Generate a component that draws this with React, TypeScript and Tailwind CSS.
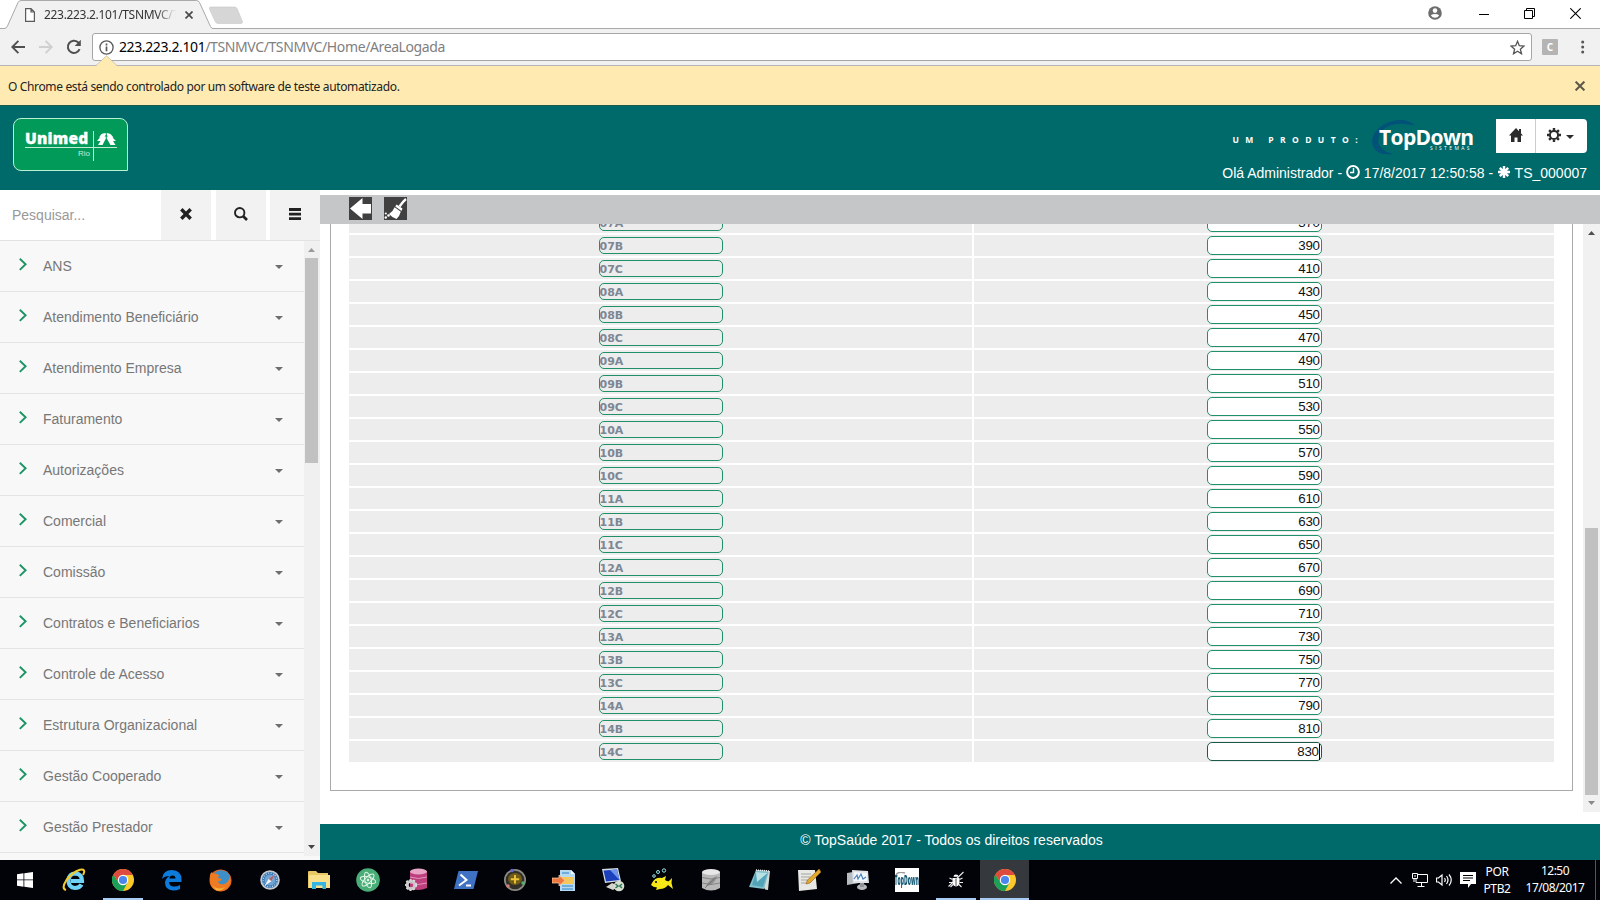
import type { ReactNode } from "react";

const menuItems = [
  "ANS",
  "Atendimento Beneficiário",
  "Atendimento Empresa",
  "Faturamento",
  "Autorizações",
  "Comercial",
  "Comissão",
  "Contratos e Beneficiarios",
  "Controle de Acesso",
  "Estrutura Organizacional",
  "Gestão Cooperado",
  "Gestão Prestador",
];

const rows = [
  "07A", "07B", "07C", "08A", "08B", "08C", "09A", "09B", "09C", "10A", "10B", "10C",
  "11A", "11B", "11C", "12A", "12B", "12C", "13A", "13B", "13C", "14A", "14B", "14C",
].map((code, i) => ({ code, value: 370 + i * 20 }));

function TabStrip() {
  return (
    <div className="flex h-[29px] shrink-0 border-b border-[#a9a9a9] bg-white">
      <div className="grid h-[29px] w-[213px] shrink-0">
        <svg className="[grid-area:1/1]" width="213" height="29" viewBox="0 0 213 29">
          <path d="M0 29V28.5H4Q6.5 28.5 7.500 26L18 2.500Q19 .5 21 .5H196.500Q198.500 .5 199.500 2.500L210.500 26.500Q211.500 28.500 213 28.500V29Z" fill="#f1f1f1" />
          <path d="M0 28.500H4Q6.500 28.500 7.500 26L18 2.500Q19 .5 21 .5H196.500Q198.500 .5 199.500 2.500L210.500 26.500Q211.500 28.500 213 28.500" fill="none" stroke="#a9a9a9" />
        </svg>
        <div className="z-10 flex h-[29px] items-center pl-[25px] [grid-area:1/1]">
          <svg width="10" height="14" viewBox="0 0 10 14" fill="#fff" stroke="#5a5a5a" strokeWidth="1.200">
            <path d="M.6.6H6L9.400 4V13.400H.6ZM6 .6V4H9.400" />
          </svg>
          <span className="ml-[9px] w-[132px] overflow-hidden whitespace-nowrap text-[12px] tracking-[-0.32px] text-[#333] [mask-image:linear-gradient(to_right,#000_112px,transparent_132px)]">
            223.223.2.101/TSNMVC/TSNMVC
          </span>
          <svg className="ml-[9px]" width="8" height="8" viewBox="0 0 8 8" stroke="#4a4a4a" strokeWidth="1.700">
            <path d="M.5.5L7.500 7.500M7.500.5L.5 7.500" />
          </svg>
        </div>
      </div>
      <svg className="-ml-[5px] mt-[6px]" width="36" height="19" viewBox="0 0 36 19">
        <path d="M3 1H26.500Q28.500 1 29.200 2.800L34.400 15.500Q35 17.500 33 17.500H10Q8 17.500 7.200 15.600L1.500 3Q.8 1 3 1Z" fill="#d6d6d6" stroke="#c8c8c8" strokeWidth=".6" />
      </svg>
      <div className="flex flex-1 items-center justify-end pb-[2px]">
        <svg width="14" height="14" viewBox="0 0 14 14">
          <circle cx="7" cy="7" r="6.800" fill="#6d6d6d" />
          <circle cx="7" cy="4.600" r="2.300" fill="#fff" />
          <path d="M2.800 9.200Q4.500 7.900 7 7.900T11.200 9.200Q9.800 11.700 7 11.700T2.800 9.200Z" fill="#fff" />
        </svg>
        <svg className="ml-[37px]" width="11" height="11" viewBox="0 0 11 11" stroke="#000"><path d="M0 6.500H10" /></svg>
        <svg className="ml-[34px]" width="11" height="11" viewBox="0 0 11 11" fill="none" stroke="#000"><path d="M.5 2.500H8.500V10.500H.5ZM2.500 2.500V.5H10.500V8.500H8.500" /></svg>
        <svg className="ml-[35px] mr-[19px]" width="11" height="11" viewBox="0 0 11 11" stroke="#000" strokeWidth="1.100"><path d="M.3.3L10.700 10.700M10.700.3L.3 10.700" /></svg>
      </div>
    </div>
  );
}

function AddressBar() {
  return (
    <div className="flex h-[37px] shrink-0 items-center border-b border-[#b5b5b5] bg-[#f1f1f1] pl-[11px]">
      <svg width="14" height="14" viewBox="0 0 14 14" fill="none" stroke="#4f4f4f" strokeWidth="1.900"><path d="M14 7H1.600M7.400 .8L1.300 7L7.400 13.200" /></svg>
      <svg className="ml-[14px]" width="14" height="14" viewBox="0 0 14 14" fill="none" stroke="#d0d0d0" strokeWidth="1.900"><path d="M0 7H12.400M6.600 .8L12.700 7L6.600 13.200" /></svg>
      <svg className="ml-[13px]" width="16" height="16" viewBox="0 0 16 16" fill="none"><path d="M13.600 10.200A6.100 6.100 0 1 1 12 3.300L13.400 4.800" stroke="#4f4f4f" strokeWidth="2" /><path d="M14.800 .8V6.900H8.700Z" fill="#4f4f4f" /></svg>
      <div className="relative ml-[10px] flex h-[28px] w-[1440px] items-center rounded-[3px] border border-[#a6a6a6] bg-white pl-[6px]">
        <svg width="15" height="15" viewBox="0 0 15 15" fill="none" stroke="#5a5a5a"><circle cx="7.500" cy="7.500" r="6.600" strokeWidth="1.300" /><path d="M7.500 6.500V11.200M7.500 3.600V5.400" strokeWidth="1.700" /></svg>
        <span className="mb-[2px] ml-[5px] text-[14px] tracking-[-0.39px] text-[#808080]"><span className="text-black">223.223.2.101</span>/TSNMVC/TSNMVC/Home/AreaLogada</span>
        <svg className="ml-auto mr-[6px]" width="15" height="15" viewBox="0 0 15 15" fill="none" stroke="#555" strokeWidth="1.300"><path d="M7.500 1.300L9.300 5.700L14 6.100L10.400 9.200L11.500 13.800L7.500 11.300L3.500 13.800L4.600 9.200L1 6.100L5.700 5.700Z" /></svg>
        <svg className="absolute left-[3px] top-[21px]" width="21" height="12" viewBox="0 0 21 12"><path d="M0 11L10.500 .8L21 11V12H0Z" fill="#ffebb2" /><path d="M0 10.500L10.500 .8L21 10.500" fill="none" stroke="#c8c0a4" strokeWidth=".8" /></svg>
      </div>
      <div className="ml-[10px] flex h-4 w-4 items-center justify-center rounded-[1px] bg-[#b4b4b4] text-[10px] font-bold text-white">C</div>
      <svg className="ml-[23px]" width="4" height="14" viewBox="0 0 4 14" fill="#555"><circle cx="1.700" cy="2" r="1.500" /><circle cx="1.700" cy="7" r="1.500" /><circle cx="1.700" cy="12" r="1.500" /></svg>
    </div>
  );
}

function UnimedLogo() {
  return (
    <div className="flex h-[53px] w-[115px] rounded-[8px] rounded-br-none border border-[#b9f0d4] bg-[#029a58] pl-[11px] pt-[12px] text-white">
      <div className="grid h-[30px] w-[92px] grid-cols-[69px_23px] grid-rows-[17px_13px]">
        <div className="flex items-center border-b border-r border-[#c5ead7] font-['Open_Sans'] text-[15.500px] leading-none font-extrabold">
          <span className="w-[67px] tracking-[0.2px] [-webkit-text-stroke:0.3px_#fff]">Unimed</span>
        </div>
        <div className="border-b border-[#c5ead7] pl-[3px] pt-[2px]">
          <svg width="19" height="12" viewBox="0 0 19 12" fill="#fff">
            <path d="M4 1.500Q5 0 8.800 0V2L7.500 3.500H8.800V5.500L5.500 12H1L3.500 8H0L3 4.500H2Z" />
            <path d="M9.800 0Q12.500 0 14 1.500L16.500 4.500H15.500L19 8H16L18.500 12H13.500L9.800 5.500V3.500H11L9.800 2Z" />
          </svg>
        </div>
        <div className="border-r border-[#c5ead7] pr-[3px] text-right font-['Liberation_Sans'] text-[8px] leading-[11px] text-[#c5ead7]">Rio</div>
        <div />
      </div>
    </div>
  );
}

function TopDownLogo() {
  return (
    <div className="grid h-[38px] w-[108px]">
      <svg className="[grid-area:1/1]" width="60" height="38" viewBox="0 0 60 38">
        <path d="M44 7.500Q36 .5 24 2.500Q9 5.500 3 16Q-1.500 26 5 32.500Q11 37.500 22 36Q10 33.500 7.500 26Q6 17 14 10Q24 3 44 7.500Z" fill="#015178" />
      </svg>
      <div className="z-10 pl-[8px] pt-[10px] font-['Open_Sans'] leading-none text-white [grid-area:1/1]">
        <div className="whitespace-nowrap text-[21px] leading-[18px] font-bold tracking-[-0.62px]">TopDown</div>
        <div className="pl-[51px] text-[5px] leading-[5px] tracking-[2.400px]">SISTEMAS</div>
      </div>
    </div>
  );
}

function Header() {
  return (
    <header className="flex h-[85px] shrink-0 justify-between border-t border-[#1c5c4c] bg-[#00696a] pl-[13px] pr-[13px] pt-[12px] font-['Liberation_Sans',sans-serif]">
      <UnimedLogo />
      <div className="flex flex-col items-end text-white">
        <div className="flex h-[38px] items-start">
          <div className="mr-[7px] pt-[17px] font-['Open_Sans'] text-[8.500px] leading-[10px] font-bold tracking-[6.400px] whitespace-pre">UM PRODUTO:</div>
          <TopDownLogo />
          <div className="ml-[17px] mt-[1px] flex h-[34px] rounded-r-[4px] bg-white">
            <div className="flex w-[40px] items-center justify-center border-r border-[#ccc] pb-[2px]">
              <svg width="14" height="14" viewBox="0 0 14 14" fill="#2b2b2b"><path d="M7 0L14 7.500H12V14H8.500V9.500H5.500V14H2V7.500H0Z" /><path d="M10 1H12V5H10Z" /></svg>
            </div>
            <div className="flex w-[51px] items-center justify-center gap-[5px] pr-[3px] pb-[2px]">
              <svg width="14" height="14" viewBox="-7 -7 14 14"><circle r="4.100" fill="none" stroke="#2b2b2b" strokeWidth="2" /><g stroke="#2b2b2b" strokeWidth="2.400"><path d="M0-7V-4.500M0 7V4.500M-7 0H-4.500M7 0H4.500M-4.900-4.900L-3.200-3.200M4.900 4.900L3.200 3.200M-4.900 4.900L-3.200 3.200M4.900-4.900L3.200-3.200" /></g></svg>
              <svg className="mt-[3px]" width="8" height="4" viewBox="0 0 8 4" fill="#2b2b2b"><path d="M0 0H8L4 4Z" /></svg>
            </div>
          </div>
        </div>
        <div className="mt-[7px] flex items-center text-[14px] leading-[20px] whitespace-pre">
          <span>Olá Administrador - </span>
          <svg className="mb-[2px]" width="14" height="14" viewBox="0 0 14 14" fill="none" stroke="#fff"><circle cx="7" cy="7" r="5.900" strokeWidth="2" /><path d="M7.500 3V7.500H4" strokeWidth="1.400" /></svg>
          <span> 17/8/2017 12:50:58 - </span>
          <svg className="mb-[2px]" width="14" height="14" viewBox="-7 -7 14 14" stroke="#fff" strokeWidth="2.400"><path d="M0-6V6M-6 0H6M-4.200-4.200L4.200 4.200M-4.200 4.200L4.200-4.200" /></svg>
          <span> TS_000007</span>
        </div>
      </div>
    </header>
  );
}

function SearchButton({ children }: { children: ReactNode }) {
  return <div className="flex h-[50px] w-[50px] items-center justify-center bg-[#f2f2f2] pb-[2px]">{children}</div>;
}

function Sidebar() {
  return (
    <aside className="flex w-[320px] shrink-0 flex-col overflow-hidden bg-[#f8f8f8]">
      <div className="flex h-[51px] shrink-0 border-b border-[#e2e2e2] bg-white">
        <div className="flex w-[161px] items-center pl-[12px] text-[14px] text-[#999]">Pesquisar...</div>
        <div className="flex flex-1 justify-between">
          <SearchButton>
            <svg width="12" height="12" viewBox="0 0 12 12" stroke="#222" strokeWidth="3.400"><path d="M1.300 1.300L10.700 10.700M10.700 1.300L1.300 10.700" /></svg>
          </SearchButton>
          <SearchButton>
            <svg width="14" height="14" viewBox="0 0 14 14" fill="none" stroke="#222"><circle cx="5.700" cy="5.700" r="4.700" strokeWidth="1.900" /><path d="M9 9L13 13" strokeWidth="2.600" /></svg>
          </SearchButton>
          <SearchButton>
            <svg width="12" height="12" viewBox="0 0 12 12" fill="#222"><path d="M0 0H12V3H0ZM0 4.700H12V7.500H0ZM0 9.200H12V12H0Z" /></svg>
          </SearchButton>
        </div>
      </div>
      <div className="flex min-h-0 flex-1">
        <div className="w-[304px] overflow-hidden">
          {menuItems.map((item) => (
            <div key={item} className="flex h-[51px] items-center border-b border-[#e4e4e4] pl-[19px] pr-[21px] text-[14px] text-[#777]">
              <svg className="mb-[3px]" width="8" height="13" viewBox="0 0 8 13" fill="none" stroke="#1d9464" strokeWidth="1.900"><path d="M.8.8L6.600 6.300L.8 11.900" /></svg>
              <span className="ml-[16px]">{item}</span>
              <svg className="ml-auto mt-[2px]" width="8" height="4" viewBox="0 0 8 4" fill="#6e6e6e"><path d="M0 0H8L4 4Z" /></svg>
            </div>
          ))}
        </div>
        <div className="flex h-[615px] w-[16px] flex-col items-center bg-[#f0f0f0] pt-[7px] pb-[7px]">
          <svg className="mr-[1px]" width="7" height="4" viewBox="0 0 7 4" fill="#9a9a9a"><path d="M0 4H7L3.500 0Z" /></svg>
          <div className="mr-[1px] mt-[6px] h-[205px] w-[13px] bg-[#c1c1c1]" />
          <svg className="mr-[1px] mt-auto" width="7" height="4" viewBox="0 0 7 4" fill="#444"><path d="M0 0H7L3.500 4Z" /></svg>
        </div>
      </div>
    </aside>
  );
}

function Content() {
  return (
    <main className="flex flex-1 flex-col bg-white pt-[5px]">
      <div className="flex h-[29px] shrink-0 gap-[12px] bg-[#c4c6c8] pl-[29px] pt-[2px]">
        <svg width="23" height="23" viewBox="0 0 23 23"><path fill="#404040" d="M0 0H23V23H0Z" /><path d="M1 11.500L13.500 1V7H22V16.500H13.500V22Z" fill="#fff" /></svg>
        <svg width="23" height="23" viewBox="0 0 23 23">
          <path fill="#404040" d="M0 0H23V23H0Z" />
          <path d="M22 2Q19 4.500 15.500 9.500" stroke="#fff" strokeWidth="2.300" fill="none" />
          <path d="M12.500 7.500L18.500 11.500L17.500 14L11.300 9.500Z" fill="#fff" />
          <path d="M10.600 10.200L16.800 14.800Q15.500 19.500 12.500 22Q8 20.500 5 17Q9 14.500 10.600 10.200Z" fill="#fff" />
          <circle cx="1.800" cy="16.500" r="1.100" fill="#fff" /><circle cx="4.500" cy="18.500" r="1.300" fill="#fff" /><circle cx="1.800" cy="20.500" r="1.200" fill="#fff" />
        </svg>
      </div>
      <div className="flex h-[600px] shrink-0">
        <div className="ml-[10px] flex h-[567px] w-[1243px] flex-col justify-end overflow-hidden border-x border-b border-[#a9a9a9] pb-[28px] pl-[18px]">
          <div className="flex flex-col gap-[2px]">
            {rows.map(({ code, value }, i) => (
              <div key={code} className="flex h-[21px] gap-[2px]">
                <div className="flex w-[623px] items-center justify-center bg-[#ededed]">
                  <div className="mb-[1px] flex h-[17px] w-[124px] items-center rounded-[5px] border border-[#209068] pt-[2px] font-['DejaVu_Sans',sans-serif] text-[11px] leading-none font-bold text-[#7d8794]">{code}</div>
                </div>
                <div className="flex w-[580px] items-center justify-center bg-[#ededed]">
                  <div className={"flex h-[19px] w-[115px] items-center justify-end rounded-[5px] border bg-white pr-[1px] text-[13.300px] leading-none tracking-[-0.35px] text-[#111] " + (i === rows.length - 1 ? "border-[#1b5a4b]" : "border-[#209068]")}>
                    {value}
                    {i === rows.length - 1 && <span className="h-[16px] w-px bg-black" />}
                  </div>
                </div>
              </div>
            ))}
          </div>
        </div>
        <div className="ml-[10px] flex h-[588px] w-[17px] flex-col items-center bg-[#f1f1f1] pt-[7px] pb-[7px]">
          <svg width="7" height="4" viewBox="0 0 7 4" fill="#505050"><path d="M0 4H7L3.500 0Z" /></svg>
          <div className="mt-[293px] h-[267px] w-[13px] bg-[#c1c1c1]" />
          <svg className="mt-auto" width="7" height="4" viewBox="0 0 7 4" fill="#8a8a8a"><path d="M0 0H7L3.500 4Z" /></svg>
        </div>
      </div>
      <footer className="flex flex-1 items-center justify-center bg-[#00696a] pb-[4px] pl-[3px] pr-[20px] text-[14px] text-white">© TopSaúde 2017 - Todos os direitos reservados</footer>
    </main>
  );
}

function Chrome() {
  return (
    <svg width="22" height="22" viewBox="-11 -11 22 22">
      <circle r="11" fill="#fbc92c" />
      <path d="M-9.530-5.500A11 11 0 0 0 0 11L4.500 2.500L-4.500 2.500Z" fill="#1ba05a" />
      <path d="M-9.530-5.500A11 11 0 0 1 9.800-5H0L-4.500 2.500Z" fill="#dd4b3e" />
      <circle r="5.200" fill="#fff" /><circle r="4.100" fill="#4a86ee" />
    </svg>
  );
}

const taskIcons: ReactNode[] = [
  <svg width="16" height="16" viewBox="0 0 16 16" fill="#fff"><path d="M0 2.200L6.500 1.300V7.500H0ZM7.300 1.200L16 0V7.500H7.300ZM0 8.300H6.500V14.700L0 13.800ZM7.300 8.300H16V16L7.300 14.800Z" /></svg>,
  <svg width="24" height="24" viewBox="0 0 24 24" fill="none"><path d="M19.500 16.500Q17.500 20 13 20Q6.500 19.500 6.500 12.500Q7 5.500 13.500 5.500Q20 6 20 13H9" stroke="#6fd3f7" strokeWidth="4.200" /><path d="M4 22Q-1 20.500 4.500 12Q10.500 4 18 1.700Q24.500 .5 21 7" stroke="#f2c92f" strokeWidth="2.100" /></svg>,
  <Chrome />,
  <svg width="22" height="22" viewBox="0 0 22 22"><path d="M1 10Q2 1 11 1Q20.500 1.500 20.500 10.500V13H8Q8.500 17.500 13 17.500Q16.500 17.500 19 16V20Q16 21.500 12 21.500Q4 21 4 13.500Q4.500 9 8.500 7Q3.500 7 1 10ZM8.300 9.500H14.500Q14.500 6.500 11.500 6.500Q8.800 6.500 8.300 9.500Z" fill="#0c7bdc" /></svg>,
  <svg width="23" height="23" viewBox="0 0 23 23"><circle cx="11.500" cy="11.500" r="11" fill="#e4661c" /><path d="M5 4Q11-1 18 3Q23 8 20 14Q16 19 10 16Q6 13 8 8Z" fill="#3c8fc9" /><path d="M1 6Q2 2 4 4Q7 4.500 10 6L9 9L13 10Q11 13 9 12Q10 16 15 15Q19 14 21 8Q23 15 17 20Q9 25 3 18Q0 14 1 6Z" fill="#ee7b21" /><path d="M3 16Q9 22 16 18Q12 23 7 21Z" fill="#f6b63c" /></svg>,
  <svg width="20" height="20" viewBox="0 0 20 20"><circle cx="10" cy="10" r="9.800" fill="#c3c9d0" /><circle cx="10" cy="10" r="8" fill="#3978b5" /><circle cx="10" cy="10" r="5.500" fill="#6ea3d2" /><circle cx="10" cy="10" r="6.800" fill="none" stroke="#c2daf0" strokeWidth="1.200" strokeDasharray="1 1.500" /><path d="M15.500 4L11.300 11.300L4.500 16L8.700 8.700Z" fill="#f2f5f8" /><path d="M15.500 4L11.300 11.300L8.700 8.700Z" fill="#a2646c" /></svg>,
  <svg width="22" height="19" viewBox="0 0 22 19"><path d="M0 1Q0 0 1 0H8L10 2H20V4H22V17H0Z" fill="#e9c765" /><path d="M1 4H22V17H1Z" fill="#fbe08b" /><path d="M4 11H18V18H14.500V14.500H8V18H4Z" fill="#34b5e4" /></svg>,
  <svg width="24" height="24" viewBox="-12 -12 24 24" fill="none" stroke="#e2f5e8" strokeWidth="1"><circle r="11.800" fill="#48ad76" stroke="none" /><g transform="rotate(15)"><ellipse rx="8" ry="3.100" /><ellipse rx="8" ry="3.100" transform="rotate(60)" /><ellipse rx="8" ry="3.100" transform="rotate(120)" /></g><circle r="1" fill="#fff" /></svg>,
  <svg width="23" height="24" viewBox="0 0 23 24"><path d="M5 3V20Q13 24 22 20V3Z" fill="#bd3f7e" /><ellipse cx="13.500" cy="3.500" rx="8.500" ry="3" fill="#e8a5c5" /><path d="M5 9Q13 12 22 9M5 15Q13 18 22 15" stroke="#e495ba" fill="none" /><circle cx="6" cy="17" r="3.800" fill="none" stroke="#c9c9c9" strokeWidth="3" /><circle cx="6" cy="17" r="5.300" fill="none" stroke="#ddd" strokeWidth="1.600" strokeDasharray="2 1.800" /></svg>,
  <svg width="24" height="18" viewBox="0 0 24 18"><path d="M4.500 0H24L19.500 18H0Z" fill="#3f71c4" /><path d="M6.500 3.500L12.500 9L5 14.500M12 14.500H17" fill="none" stroke="#fff" strokeWidth="2" /></svg>,
  <svg width="24" height="24" viewBox="0 0 24 24"><circle cx="12" cy="12" r="11" fill="#8c8b84" /><circle cx="12" cy="12" r="9.300" fill="#302f2a" /><ellipse cx="12" cy="11" rx="7" ry="6" fill="#705b17" /><path d="M12 7V15.500M7.800 11.200H16.200" stroke="#efc53a" strokeWidth="1.900" /><circle cx="9" cy="2.500" r="1.800" fill="#6767d0" /><circle cx="20" cy="15" r="1.800" fill="#54b070" /><circle cx="5" cy="18" r="1.800" fill="#d77a7a" /></svg>,
  <svg width="24" height="23" viewBox="0 0 24 23"><path d="M8 1H19L23 5V22H8Z" fill="#b6d9f2" /><path d="M19 1V5H23" fill="#f4faff" /><path d="M10 4H17M10 17H21M10 20H21" stroke="#5b9ed4" strokeWidth="1.500" /><path d="M8 8H22V15H8Z" fill="#f5c75b" /><path d="M0 9H7V6L13 11.500L7 17V14H0Z" fill="#ee7840" stroke="#ffd0a5" strokeWidth=".7" /></svg>,
  <svg width="24" height="24" viewBox="0 0 24 24"><path d="M1 1L17 0L20 13L4 15Z" fill="#d6dbe5" /><path d="M2.500 2.500L16 1.500L18.500 12L5 13.500Z" fill="#1c3fbd" /><path d="M9 2L16 1.500L18.500 12Z" fill="#6e94eb" /><path d="M5 19L11 15L18 18L12 22Z" fill="#d5d5cd" /><circle cx="18" cy="18" r="5.300" fill="#d6dfd0" /><path d="M14.500 16L17 18L14.500 20M21 16L18.700 18L21 20" stroke="#2e7752" fill="none" strokeWidth="1.500" /></svg>,
  <svg width="24" height="24" viewBox="0 0 24 24"><path d="M2 15Q5 9 12 10L16 8L15 12Q18 14 19 13L22 10L21.500 15L23 21L18 17Q15 21 10 21L6 22L7 19.500Q3 19 1 17Z" fill="#f8e818" /><circle cx="6" cy="14" r="1" fill="#000" /><circle cx="4" cy="8" r="1.300" fill="none" stroke="#9ae5e8" /><circle cx="8" cy="4" r="1.500" fill="none" stroke="#9ae5e8" /><circle cx="14" cy="2.500" r="1.700" fill="none" stroke="#9ae5e8" /></svg>,
  <svg width="18" height="22" viewBox="0 0 18 22"><path d="M0 3V19Q9 24 18 19V3Z" fill="#b8b8b8" /><ellipse cx="9" cy="3" rx="9" ry="3" fill="#e7e7e7" /><path d="M3 19Q6 11 15 7Q13 15 5 17Z" fill="#8d8d8d" /><path d="M3 19L12 10M0 8.500Q9 11.500 18 8.500M0 14Q9 17 18 14" fill="none" stroke="#777" strokeWidth=".8" /></svg>,
  <svg width="22" height="22" viewBox="0 0 22 22"><path d="M7 1L21 2L19 21L16 20.500Z" fill="#d5dcd8" /><path d="M7 1L20 2L15 20L0 18Z" fill="#7ec0cc" /><path d="M7 3L18.500 4L14 18L3 16Z" fill="#54a4b8" /><path d="M7 3L18.500 4L8 13Z" fill="#b9e2e6" /><path d="M7 1L20 2" stroke="#eee" strokeWidth="1.500" strokeDasharray="1 1" /></svg>,
  <svg width="24" height="23" viewBox="0 0 24 23"><path d="M1 1H18L20 20L2 22Z" fill="#e8e8e4" /><path d="M4 5H14M4 8H13M4 11H11M4 14H10" stroke="#a5a59e" /><path d="M22 0L24 3L13 14L9 15L10.500 11Z" fill="#e3a92d" stroke="#9a6a22" strokeWidth=".7" /></svg>,
  <svg width="24" height="22" viewBox="0 0 24 22"><path d="M1 4L13 2V14L1 16Z" fill="#b7bcc0" /><path d="M6 1L22 2L23 14L7 14Z" fill="#e0e3e5" /><path d="M8 3L21 4V12H8Z" fill="#f2f7fc" /><path d="M8 10L11 6L12 10L15 5L17 10L20 8" fill="none" stroke="#4a82bd" strokeWidth="1.200" /><ellipse cx="16" cy="18" rx="5" ry="3" fill="#b6b9bc" /><path d="M14 14H18V18H14Z" fill="#8e9498" /></svg>,
  <div className="flex h-6 w-6 flex-col items-center overflow-hidden bg-white pt-[4px]"><svg className="shrink-0" width="24" height="3" viewBox="0 0 24 3"><path d="M1 3Q3-1 10 1" fill="none" stroke="#999" strokeWidth="1.500" /></svg><span className="origin-center scale-x-[.56] scale-y-150 font-['Open_Sans'] text-[9px] leading-[10px] font-extrabold text-[#155a75]">TopDown</span></div>,
  <svg width="16" height="18" viewBox="0 0 16 18" fill="none" stroke="#eee" strokeWidth="1.100"><path d="M4.500 7H11.500V11Q11.500 15 8 15.500Q4.500 15 4.500 11ZM5.500 5.800Q5.500 3.500 8 3.500T10.500 5.800Z" fill="#fff" stroke="none" /><path d="M4.500 8.500L1.500 7M4.500 11.500H1M5 13.500L2.500 16M11.500 8.500L14.500 7M11.500 11.500H15M11 13.500L13.500 16M15.500 1L.5 15.500" /><path d="M8 7.500V15" stroke="#222" strokeWidth=".8" /></svg>,
  <Chrome />,
];

function Taskbar() {
  return (
    <div className="flex h-[40px] shrink-0 bg-[#010308] text-white">
      {taskIcons.map((icon, i) => (
        <div key={i} className={"flex h-[40px] w-[49px] shrink-0 flex-col items-center " + (i === 20 ? "bg-[#35383c]" : "")}>
          <div className="flex h-[38px] items-center pt-[2px]">{icon}</div>
          {(i === 2 || i === 19 || i === 20) && <div className={"h-[2px] bg-[#a9cdf2] " + (i === 20 ? "w-[49px]" : "w-[40px]")} />}
        </div>
      ))}
      <div className="flex flex-1 items-center justify-end">
        <svg width="12" height="7" viewBox="0 0 12 7" fill="none" stroke="#fff" strokeWidth="1.300"><path d="M.5 6.500L6 1L11.500 6.500" /></svg>
        <svg className="ml-[10px]" width="16" height="14" viewBox="0 0 16 14" fill="none" stroke="#fff"><path d="M6 1.500H15.500V9.500H4V6M9.500 9.500V13M5.500 13.500H12.500M.5.5H5.500V5.500H.5ZM2 5.500V9M2 3H4" /></svg>
        <svg className="ml-[8px]" width="17" height="14" viewBox="0 0 17 14" fill="none" stroke="#fff" strokeWidth="1.200"><path d="M.5 5V9H2.500L6 12V2L2.500 5ZM8.500 5Q10 7 8.500 9M10.500 3Q13.500 7 10.500 11M13 1.500Q17.500 7 13 12.500" /></svg>
        <svg className="ml-[7px]" width="16" height="16" viewBox="0 0 16 16"><path d="M0 0H16V12H11L8 16V12H0Z" fill="#fff" /><path d="M3 3.500H13M3 6H13M3 8.500H10" stroke="#000" strokeWidth="1.200" /></svg>
        <div className="ml-[7px] w-[28px] text-center text-[12px] leading-[17px] tracking-[-0.4px]"><div>POR</div><div>PTB2</div></div>
        <div className="ml-[14px] mb-[2px] w-[60px] text-center text-[12px] leading-[17px] tracking-[-0.5px] whitespace-nowrap"><div>12:50</div><div>17/08/2017</div></div>
        <div className="ml-[10px] mr-[4px] h-[40px] w-px bg-[#555]" />
      </div>
    </div>
  );
}

export default function App() {
  return (
    <div className="flex h-[900px] w-[1600px] flex-col overflow-hidden bg-white font-['Noto_Sans',sans-serif]">
      <TabStrip />
      <AddressBar />
      <div className="flex h-[39px] shrink-0 items-center justify-between bg-[#ffebb2] pl-[8px] pr-[15px] text-[12px] text-[#222]">
        <span className="pt-[2px] tracking-[-0.35px]">O Chrome está sendo controlado por um software de teste automatizado.</span>
        <svg width="10" height="10" viewBox="0 0 10 10" stroke="#5c5748" strokeWidth="2"><path d="M.6.6L9.400 9.400M9.400.6L.6 9.400" /></svg>
      </div>
      <Header />
      <div className="flex min-h-0 flex-1 font-['Liberation_Sans',sans-serif]">
        <Sidebar />
        <Content />
      </div>
      <Taskbar />
    </div>
  );
}
